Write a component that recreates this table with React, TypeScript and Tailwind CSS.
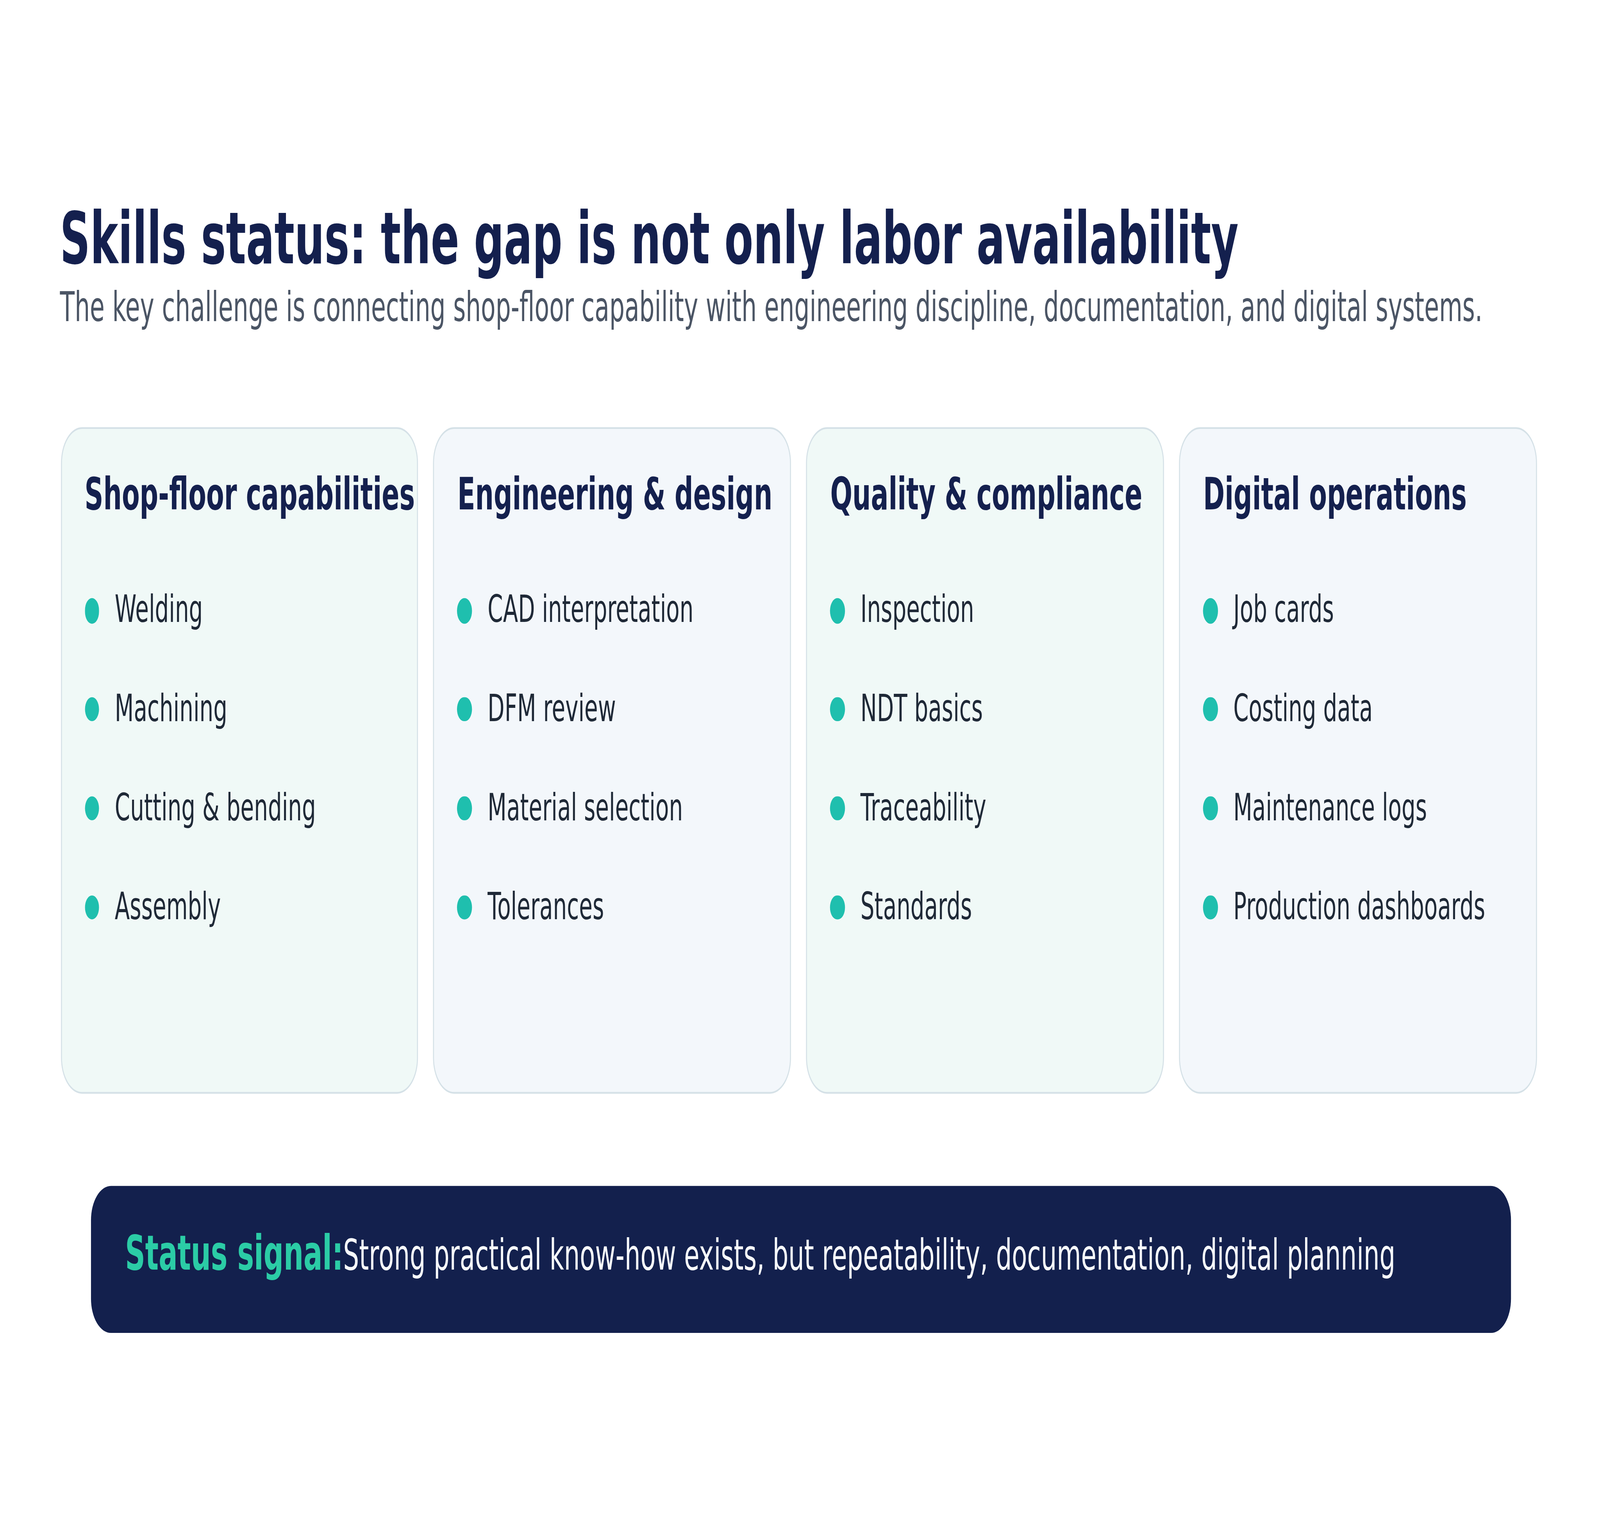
import { useEffect, useState } from "react"

const groups = [
  {
    title: "Shop-floor capabilities",
    bg: "bg-[#f0f9f7]",
    items: ["Welding", "Machining", "Cutting & bending", "Assembly"],
  },
  {
    title: "Engineering & design",
    bg: "bg-[#f3f7fb]",
    items: ["CAD interpretation", "DFM review", "Material selection", "Tolerances"],
  },
  {
    title: "Quality & compliance",
    bg: "bg-[#f0f9f7]",
    items: ["Inspection", "NDT basics", "Traceability", "Standards"],
  },
  {
    title: "Digital operations",
    bg: "bg-[#f3f7fb]",
    items: ["Job cards", "Costing data", "Maintenance logs", "Production dashboards"],
  },
]

// 1600x900 slide, fitted to whatever window it is opened in
function useFit() {
  const read = () => ({ sx: window.innerWidth / 1600, sy: window.innerHeight / 900 })
  const [fit, setFit] = useState(read)
  useEffect(() => {
    const onResize = () => setFit(read())
    window.addEventListener("resize", onResize)
    return () => window.removeEventListener("resize", onResize)
  }, [])
  return fit
}

export default function App() {
  const { sx, sy } = useFit()

  return (
    <div className="w-screen h-screen overflow-hidden bg-white">
      <div
        className="w-[1600px] h-[900px] origin-top-left bg-white font-['DejaVu_Sans','Liberation_Sans',sans-serif]"
        style={{ transform: `scale(${sx}, ${sy})` }}
      >
        <div className="flex flex-col pl-[60px] pt-[114.5px]">
          {/* Header */}
          <h1 className="text-[42px] leading-[1.2] font-bold text-[#14204e] whitespace-nowrap">
            Skills status: the gap is not only labor availability
          </h1>
          <p className="mt-[1px] text-[24px] leading-[1.2] text-[#4b5565] whitespace-nowrap">
            The key challenge is connecting shop-floor capability with engineering discipline, documentation, and digital systems.
          </p>

          {/* Skill groups */}
          <div className="mt-[55.5px] ml-[0.6px] w-[1476.3px] grid grid-cols-4 gap-[15.1px]">
            {groups.map((group) => (
              <div
                key={group.title}
                className={`h-[390px] rounded-[21px] border-[1.5px] border-[#d5e1e7] ${group.bg} pl-[23px] pt-[23.3px]`}
              >
                <h3 className="text-[26px] leading-[1.2] font-bold text-[#14204e] whitespace-nowrap">
                  {group.title}
                </h3>
                <ul className="mt-[38.6px] flex flex-col gap-[31.5px]">
                  {group.items.map((item) => (
                    <li key={item} className="flex items-center gap-[15.8px] h-[26.3px]">
                      <span className="w-[14.4px] h-[14.4px] rounded-full bg-[#1fbfae] shrink-0"></span>
                      <span className="text-[22px] leading-[1.2] text-[#1f2937] whitespace-nowrap">{item}</span>
                    </li>
                  ))}
                </ul>
              </div>
            ))}
          </div>

          {/* Status signal bar */}
          <div className="mt-[54.2px] ml-[30.6px] w-[1420.3px] h-[86px] rounded-[20px] bg-[#13204d] pl-[34.5px] pt-[22.6px] flex items-baseline whitespace-nowrap">
            <span className="text-[28px] leading-[1.2] font-bold text-[#2bcca6]">Status signal:</span>
            <span className="text-[25px] leading-[1.2] text-[#f8fafc]">
              Strong practical know-how exists, but repeatability, documentation, digital planning
            </span>
          </div>
        </div>
      </div>
    </div>
  )
}
